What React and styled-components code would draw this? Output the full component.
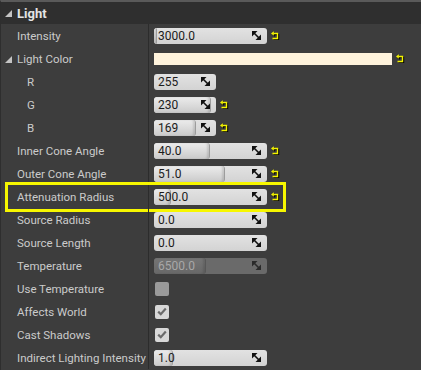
import styled, { createGlobalStyle } from "styled-components"

const GlobalStyle = createGlobalStyle`
    html, body {
        margin: 0;
        padding: 0;
        background: #3d3d3d;
    }
    body {
        font-family: Roboto, "Noto Sans", "Liberation Sans", sans-serif;
        overflow: hidden;
    }
`

const rows = [
    { label: "Intensity", kind: "num", value: "3000.0", width: 113, fill: 0.02, reset: true },
    { label: "Light Color", kind: "color", group: true, reset: true },
    { label: "R", kind: "num", value: "255", width: 62, fill: 0, indent: true },
    { label: "G", kind: "num", value: "230", width: 62, fill: 0.9, indent: true, reset: true },
    { label: "B", kind: "num", value: "169", width: 62, fill: 0.66, indent: true, reset: true },
    { label: "Inner Cone Angle", kind: "num", value: "40.0", width: 113, fill: 0.49, reset: true },
    { label: "Outer Cone Angle", kind: "num", value: "51.0", width: 113, fill: 0.62, reset: true },
    { label: "Attenuation Radius", kind: "num", value: "500.0", width: 113, fill: 0.14, reset: true, highlight: true },
    { label: "Source Radius", kind: "num", value: "0.0", width: 113, fill: 0 },
    { label: "Source Length", kind: "num", value: "0.0", width: 113, fill: 0 },
    { label: "Temperature", kind: "num", value: "6500.0", width: 113, fill: 0.45, disabled: true },
    { label: "Use Temperature", kind: "check", checked: false },
    { label: "Affects World", kind: "check", checked: true },
    { label: "Cast Shadows", kind: "check", checked: true },
    { label: "Indirect Lighting Intensity", kind: "num", value: "1.0", width: 113, fill: 0.16 },
]

function Triangle() {
    return (
        <TriangleIcon width='7' height='7' viewBox='0 0 7 7'>
            <polygon points='7,0 7,7 0,7' fill='#c4c4c4' />
        </TriangleIcon>
    )
}

function SpinIcon({ disabled }) {
    const c = disabled ? "#2a2a2a" : "#111"
    return (
        <SpinSvg width='9' height='9' viewBox='0 0 9 9'>
            <polygon points='0,0 5.5,0 0,5.5' fill={c} />
            <polygon points='9,9 3.5,9 9,3.5' fill={c} />
            <line x1='1.5' y1='1.5' x2='7.5' y2='7.5' stroke={c} strokeWidth='1.6' />
        </SpinSvg>
    )
}

function ResetIcon() {
    return (
        <ResetSvg width='9' height='9' viewBox='0 0 9 9'>
            <path d='M2.5 2.5 H6.5 V7.5 H1.5' fill='none' stroke='#000' strokeWidth='1.4' transform='translate(1 1)' />
            <polygon points='0,2.5 2.8,0.3 2.8,4.7' fill='#000' transform='translate(1 1)' />
            <path d='M2.5 2.5 H6.5 V7.5 H1.5' fill='none' stroke='#f4f400' strokeWidth='1.4' />
            <polygon points='0,2.5 2.8,0.3 2.8,4.7' fill='#f4f400' />
        </ResetSvg>
    )
}

function NumField({ row }) {
    return (
        <Field $width={row.width} $disabled={row.disabled}>
            {row.fill > 0 && <Fill $disabled={row.disabled} style={{ width: `${row.fill * 100}%` }} />}
            <FieldText $disabled={row.disabled}>{row.value}</FieldText>
            <SpinIcon disabled={row.disabled} />
        </Field>
    )
}

function Value({ row }) {
    if (row.kind === "color") return <Swatch />
    if (row.kind === "check")
        return (
            <Check $checked={row.checked}>
                {row.checked && (
                    <svg width='10' height='9' viewBox='0 0 10 9'>
                        <path d='M1.2 4.6 L3.8 7.2 L8.8 1.6' fill='none' stroke='#6b6b6b' strokeWidth='2.2' />
                    </svg>
                )}
            </Check>
        )
    return <NumField row={row} />
}

export default function App() {
    return (
        <Panel>
            <GlobalStyle />
            <Header>
                <Triangle />
                <h1>Light</h1>
            </Header>
            {rows.map(row => (
                <Row key={row.label}>
                    <Label $indent={row.indent}>
                        {row.group && <Triangle />}
                        <span>{row.label}</span>
                    </Label>
                    <ValueCell>
                        <Value row={row} />
                        {row.reset && <ResetIcon />}
                    </ValueCell>
                    {row.highlight && <Highlight />}
                </Row>
            ))}
        </Panel>
    )
}

const Panel = styled.div`
    width: 421px;
    height: 370px;
    background: #3d3d3d;
    border-top: 2px solid #5a5a5a;
    border-left: 1px solid #2e2e2e;
    box-sizing: border-box;
    overflow: hidden;
`

const Header = styled.div`
    height: 22px;
    display: flex;
    align-items: center;
    gap: 5px;
    padding-left: 4px;
    background: #2f2f2f;

    & > h1 {
        margin: 0;
        font-size: 13px;
        font-weight: 700;
        color: #e4e4e4;
    }
`

const TriangleIcon = styled.svg`
    flex: none;
    margin-top: 1px;
`

const Row = styled.div`
    position: relative;
    height: 23px;
    display: flex;
`

const Label = styled.div`
    width: 148px;
    flex: none;
    display: flex;
    align-items: center;
    gap: 5px;
    padding-left: ${p => (p.$indent ? "26px" : "4px")};
    box-sizing: border-box;
    border-right: 1px solid #2c2c2c;
    font-size: 11.5px;
    color: #cbcbcb;

    & > span:only-child {
        margin-left: ${p => (p.$indent ? "0" : "12px")};
    }
`

const ValueCell = styled.div`
    flex: 1;
    display: flex;
    align-items: center;
    gap: 4px;
    padding-left: 5px;
`

const Field = styled.div`
    position: relative;
    width: ${p => p.$width}px;
    height: 16px;
    border-radius: 3px;
    background: ${p => (p.$disabled ? "#6a6a6a" : "linear-gradient(#e2e2e2, #d3d3d3)")};
    display: flex;
    align-items: center;
    justify-content: space-between;
    padding: 0 6px 0 4px;
    box-sizing: border-box;
    overflow: hidden;
`

const Fill = styled.div`
    position: absolute;
    left: 0;
    top: 0;
    bottom: 0;
    border-radius: 3px;
    background: ${p =>
        p.$disabled ? "linear-gradient(#757575, #686868)" : "linear-gradient(#ececec, #d8d8d8 60%, #cacaca)"};
    border-right: 1px solid ${p => (p.$disabled ? "#575757" : "#9c9c9c")};
    box-shadow: inset -2px 0 2px rgba(0, 0, 0, 0.12);
`

const FieldText = styled.span`
    position: relative;
    font-size: 12px;
    color: ${p => (p.$disabled ? "#a8a8a8" : "#1b1b1b")};
`

const SpinSvg = styled.svg`
    position: relative;
    flex: none;
`

const ResetSvg = styled.svg`
    flex: none;
`

const Swatch = styled.div`
    width: 238px;
    height: 12px;
    background: #fff3dc;
`

const Check = styled.div`
    width: 14px;
    height: 14px;
    margin-left: 1px;
    border-radius: 2px;
    background: ${p => (p.$checked ? "#d8d8d8" : "#9a9a9a")};
    display: flex;
    align-items: center;
    justify-content: center;
`

const Highlight = styled.div`
    position: absolute;
    left: 4px;
    top: -3px;
    width: 281px;
    height: 30px;
    border: 3px solid #f7f700;
    box-sizing: border-box;
    pointer-events: none;
`
